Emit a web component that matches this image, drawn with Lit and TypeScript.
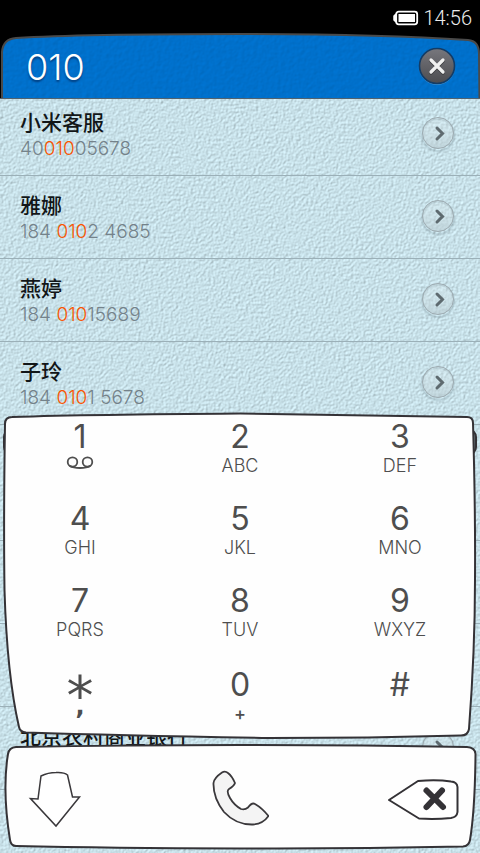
import { LitElement, html, css, nothing } from "lit";
import { customElement, property, state } from "lit/decorators.js";

interface Contact {
  name: string;
  number: string;
}

const CONTACTS: Contact[] = [
  { name: "小米客服", number: "4001005678" },
  { name: "雅娜", number: "184 0102 4685" },
  { name: "燕婷", number: "184 01015689" },
  { name: "子玲", number: "184 0101 5678" },
];

const PLACES: Contact[] = [
  { name: "", number: "" },
  { name: "", number: "" },
  { name: "", number: "" },
  { name: "北京农村商业银行", number: "" },
];

const KEYS: [string, string][] = [
  ["1", "voicemail"],
  ["2", "ABC"],
  ["3", "DEF"],
  ["4", "GHI"],
  ["5", "JKL"],
  ["6", "MNO"],
  ["7", "PQRS"],
  ["8", "TUV"],
  ["9", "WXYZ"],
  ["*", ","],
  ["0", "+"],
  ["#", ""],
];

@customElement("status-bar")
class StatusBar extends LitElement {
  static styles = css`
    :host {
      display: flex;
      justify-content: flex-end;
      align-items: center;
      gap: 4px;
      height: 32px;
      padding: 4px 8px 0 0;
      box-sizing: border-box;
      background: #000;
      color: #ececec;
      font: 300 20px/28px Roboto, sans-serif;
    }
    svg {
      display: block;
    }
  `;
  render() {
    return html`
      <svg width="26" height="16" viewBox="0 0 26 16" aria-label="Battery">
        <path d="M3 4 L1 6 V10 L3 12" fill="#fff" stroke="#fff" stroke-width="1.5" />
        <rect x="3.2" y="1.7" width="21" height="12.6" rx="2.5" fill="none" stroke="#fff" stroke-width="1.8" />
        <rect x="5.5" y="4" width="16.5" height="8" fill="#fff" />
      </svg>
      <time>14:56</time>
    `;
  }
}

@customElement("search-header")
class SearchHeader extends LitElement {
  @property() value = "";
  static styles = css`
    :host {
      display: flex;
      position: relative;
      z-index: 1;
      align-items: center;
      justify-content: space-between;
      height: 67px;
      padding: 2px 24px 0 26px;
      box-sizing: border-box;
      background: #000;
    }
    .paper {
      position: absolute;
      inset: 0;
      width: 100%;
      height: 100%;
    }
    input {
      position: relative;
      flex: 1;
      min-width: 0;
      height: 48px;
      padding: 0;
      border: 0;
      outline: 0;
      background: none;
      color: #fff;
      font: 300 36px/48px Inter, sans-serif;
      text-shadow: 0 2px 2px rgba(0, 30, 80, 0.6);
    }
    button {
      position: relative;
      padding: 0;
      border: 0;
      background: none;
      height: 40px;
    }
  `;
  render() {
    return html`
      <svg class="paper" viewBox="0 0 480 67" preserveAspectRatio="none" aria-hidden="true">
        <filter id="grain" x="0" y="0" width="100%" height="100%" color-interpolation-filters="sRGB">
          <feTurbulence type="fractalNoise" baseFrequency="0.25" numOctaves="2" seed="4" />
          <feDiffuseLighting surfaceScale="0.2" diffuseConstant="1.155" lighting-color="#0070cb" result="lit">
            <feDistantLight azimuth="225" elevation="60" />
          </feDiffuseLighting>
          <feComposite in="lit" in2="SourceAlpha" operator="in" />
        </filter>
        <path filter="url(#grain)" d="M2 67 V20 Q3 7 16 6 Q80 2 240 2 Q380 2 468 8 Q479 9 479 22 L479.500 67 Z" />
        <path d="M2 67 V20 Q3 7 16 6 Q80 2 240 2 Q380 2 468 8 Q479 9 479 22 L479.500 67" fill="none" stroke="#4a4a4a" stroke-width="2" />
        <path d="M0 66.500 H480" stroke="#51626f" />
      </svg>
      <input type="tel" aria-label="Number" .value=${this.value} />
      <button aria-label="Clear">
        <svg width="38" height="38" viewBox="0 0 38 38">
          <defs>
            <linearGradient id="metal" x2="0" y2="1">
              <stop offset="0" stop-color="#77777d" />
              <stop offset="1" stop-color="#4c4c50" />
            </linearGradient>
          </defs>
          <circle cx="19" cy="20" r="17.500" fill="none" stroke="#3c93d8" />
          <circle cx="19" cy="19" r="17.500" fill="url(#metal)" stroke="#133c66" stroke-width="1.600" />
          <path d="M13 14 L25 26 M25 14 L13 26" stroke="#3c3c3f" stroke-width="3.500" stroke-linecap="round" />
          <path d="M13 13 L25 25 M25 13 L13 25" stroke="#f0f0f0" stroke-width="3.200" stroke-linecap="round" />
        </svg>
      </button>
    `;
  }
}

@customElement("contact-row")
class ContactRow extends LitElement {
  @property({ attribute: false }) contact: Contact = { name: "", number: "" };
  @property() query = "";
  static styles = css`
    :host {
      display: flex;
      align-items: center;
      height: 83px;
      padding: 0 24px 0 20px;
      box-sizing: border-box;
      border-bottom: 1px solid #9bb0b8;
    }
    .text {
      flex: 1;
      min-width: 0;
    }
    .name {
      height: 28px;
      color: #121618;
      font: 500 21px/28px "Noto Sans CJK SC", sans-serif;
    }
    .number {
      height: 26px;
      color: #74828a;
      font: 300 19px/28px Inter, sans-serif;
    }
    mark {
      background: none;
      color: #fa5500;
    }
    button {
      height: 38px;
      padding: 0;
      border: 0;
      background: none;
    }
    svg {
      display: block;
    }
  `;
  render() {
    const { name, number } = this.contact;
    const at = number.indexOf(this.query);
    const end = at + this.query.length;
    return html`
      <div class="text">
        <div class="name">${name}</div>
        <div class="number">
          ${at < 0
            ? number
            : html`${number.slice(0, at)}<mark>${this.query}</mark>${number.slice(end)}`}
        </div>
      </div>
      <button aria-label="Details">
        <svg width="36" height="38" viewBox="0 0 36 38">
          <defs>
            <radialGradient id="shade">
              <stop offset="0.800" stop-color="#5f757e" stop-opacity="0" />
              <stop offset="0.880" stop-color="#5f757e" stop-opacity="0.250" />
              <stop offset="1" stop-color="#5f757e" stop-opacity="0" />
            </radialGradient>
            <linearGradient id="disc" x2="0" y2="1">
              <stop offset="0" stop-color="#e2eff2" stop-opacity="0.200" />
              <stop offset="1" stop-color="#b9cbd1" stop-opacity="0.650" />
            </linearGradient>
          </defs>
          <circle cx="18" cy="20" r="18" fill="url(#shade)" />
          <circle cx="18" cy="18" r="15.500" fill="url(#disc)" stroke="#9dabb1" />
          <path d="M17 13 L22.500 18.500 L17 24" fill="none" stroke="#5e6a6f" stroke-width="3" stroke-linecap="round" />
        </svg>
      </button>
    `;
  }
}

@customElement("dial-key")
class DialKey extends LitElement {
  @property() digit = "";
  @property() letters = "";
  static styles = css`
    button {
      display: block;
      width: 100%;
      height: 80px;
      padding: 0;
      border: 0;
      background: none;
      color: #4e4e4e;
      font: 300 18px/20px Inter, sans-serif;
    }
    .face {
      display: flex;
      flex-direction: column;
      align-items: center;
      height: 80px;
    }
    .digit {
      height: 32px;
      font: 400 32px/30px Inter, sans-serif;
    }
    .star {
      font: 400 54px/52px "DejaVu Sans", sans-serif;
    }
    .letters {
      height: 20px;
      margin-top: 2px;
    }
    .comma {
      font: 700 24px/4px "DejaVu Sans", sans-serif;
    }
    .plus {
      font-weight: 500;
    }
  `;
  render() {
    const kind = this.digit === "*" ? "star" : "";
    const mark = this.letters === "," ? "comma" : this.letters === "+" ? "plus" : "";
    return html`
      <button>
        <span class="face">
          <span class="digit ${kind}">${this.digit}</span>
          <span class="letters ${mark}">
            ${this.letters === "voicemail"
              ? html`<svg width="28" height="16" viewBox="0 0 28 16" aria-label="Voicemail">
                  <ellipse cx="6.500" cy="6" rx="4.800" ry="4.600" fill="none" stroke="#4e4e4e" stroke-width="1.800" />
                  <ellipse cx="21.500" cy="6" rx="4.800" ry="4.600" fill="none" stroke="#4e4e4e" stroke-width="1.800" />
                  <path d="M4 10 Q7 12 14 12 Q21 12 24 10" fill="none" stroke="#4e4e4e" stroke-width="1.800" stroke-linecap="round" />
                </svg>`
              : this.letters || nothing}
          </span>
        </span>
      </button>
    `;
  }
}

@customElement("dial-pad")
class DialPad extends LitElement {
  static styles = css`
    :host {
      display: flex;
      flex-direction: column;
      gap: 4px;
    }
    .panel {
      position: relative;
    }
    .outline {
      position: absolute;
      inset: 0;
      width: 100%;
      height: 100%;
    }
    .keys {
      position: relative;
      display: grid;
      grid-template-columns: repeat(3, 1fr);
      grid-template-rows: 82px 82px 84px 80px;
      height: 328px;
      padding-top: 10px;
      box-sizing: border-box;
    }
    .actions {
      position: relative;
      display: grid;
      grid-template-columns: repeat(3, 1fr);
      align-items: center;
      height: 109px;
      padding: 0 21px;
    }
    .actions button {
      padding: 0;
      border: 0;
      background: none;
    }
    .actions svg {
      display: block;
    }
    .hide {
      justify-self: start;
    }
    .call {
      justify-self: center;
    }
    .erase {
      justify-self: end;
    }
  `;
  render() {
    return html`
      <div class="panel">
        <svg class="outline" viewBox="0 412 480 328" preserveAspectRatio="none" aria-hidden="true">
          <path
            d="M5 424 Q5 417 12 417 Q90 414.500 240 413.500 Q370 415 467 417 Q473 417 473 423 Q475.500 510 475 580 Q475 650 469 729 Q468 735.500 461 735.500 Q370 738 270 738 Q120 735.500 26 732.500 Q20 732 19 727 Q7 675 4.500 590 Q3.500 520 5 424 Z"
            fill="#fefefe" stroke="#343236" stroke-width="2" />
        </svg>
        <div class="keys">
          ${KEYS.map(([d, l]) => html`<dial-key .digit=${d} .letters=${l}></dial-key>`)}
        </div>
      </div>
      <div class="panel">
        <svg class="outline" viewBox="0 744 480 109" preserveAspectRatio="none" aria-hidden="true">
          <path
            d="M8 754 Q9 747.500 16 747 Q130 745 240 745 Q360 745 467 747 Q475 747.500 475.500 754 Q475 810 470 840 Q469 846 463 846.500 Q350 849 240 848.500 Q110 848 16 846 Q11 846 10 840 Q2 790 8 754 Z"
            fill="#fefefe" stroke="#343236" stroke-width="2" />
        </svg>
        <div class="actions">
          <button class="hide" aria-label="Hide keypad">
            <svg width="62" height="58" viewBox="21 768 62 58">
              <path d="M41 774 Q48 770.500 56 770.500 Q64 770 67.500 773 L72.500 795 L79.500 795 L56 824 L30.500 796.500 L38 797 Z"
                fill="#fff" stroke="#3a383b" stroke-width="1.500" />
            </svg>
          </button>
          <button class="call" aria-label="Call">
            <svg width="58" height="58" viewBox="211 771 58 58">
              <path
                d="M213.500 784 Q214 779 222 773.500 Q225 771.500 228 774 Q232 777 235 784 Q234 787 229 790 Q226 792 230 799 Q234 806 241 810 Q245 811 248 808.500 Q252 803 255 805 Q262 809 268.500 817 Q263 825 253 825.500 Q236 826 224 813 Q213 799 213.500 784 Z"
                fill="#f4f4f4" stroke="#3a383b" stroke-width="1.800" stroke-linejoin="round" />
            </svg>
          </button>
          <button class="erase" aria-label="Delete">
            <svg width="72" height="42" viewBox="387 777 72 42">
              <path
                d="M389 799 L418 780 Q437 778.500 451 780.500 Q457 781 457.500 786 V811 Q457 816 451 817 Q435 818.500 419 817.500 Z"
                fill="#fff" stroke="#343236" stroke-width="2" stroke-linejoin="round" />
              <path d="M426.500 789.500 L443 806 M442 789.500 L426.500 806" stroke="#343236" stroke-width="6" stroke-linecap="round" />
            </svg>
          </button>
        </div>
      </div>
    `;
  }
}

@customElement("app-root")
class AppRoot extends LitElement {
  @state() private query = "010";
  static styles = css`
    :host {
      display: flex;
      flex-direction: column;
      position: relative;
      height: 100vh;
      min-height: 640px;
      overflow: hidden;
      background: #c5dfe8;
    }
    .results {
      position: relative;
      flex: 1;
      min-height: 0;
      margin-top: -6px;
      overflow: hidden;
    }
    .paper {
      position: absolute;
      inset: 0;
      width: 100%;
      height: 100%;
    }
    .list {
      position: relative;
    }
    .section {
      height: 33px;
      padding-top: 4px;
      box-sizing: border-box;
    }
    .band {
      height: 26px;
      margin: 0 3px;
      border: 2px solid #343236;
      border-radius: 8px;
      background: #6c7a80;
      box-sizing: border-box;
    }
    dial-pad {
      position: absolute;
      z-index: 2;
      left: 0;
      right: 0;
      bottom: 0;
    }
  `;
  render() {
    return html`
      <status-bar></status-bar>
      <search-header .value=${this.query}></search-header>
      <main class="results">
        <svg class="paper" aria-hidden="true">
          <filter id="grain" x="0" y="0" width="100%" height="100%" color-interpolation-filters="sRGB">
            <feTurbulence type="fractalNoise" baseFrequency="0.4" numOctaves="2" seed="8" />
            <feDiffuseLighting surfaceScale="0.550" diffuseConstant="1.155" lighting-color="#c8e1e9">
              <feDistantLight azimuth="225" elevation="60" />
            </feDiffuseLighting>
          </filter>
          <rect width="100%" height="100%" filter="url(#grain)" />
        </svg>
        <div class="list">
          ${CONTACTS.map((c) => html`<contact-row .contact=${c} .query=${this.query}></contact-row>`)}
          <div class="section"><div class="band"></div></div>
          ${PLACES.map((c) => html`<contact-row .contact=${c} .query=${this.query}></contact-row>`)}
        </div>
      </main>
      <dial-pad></dial-pad>
    `;
  }
}
